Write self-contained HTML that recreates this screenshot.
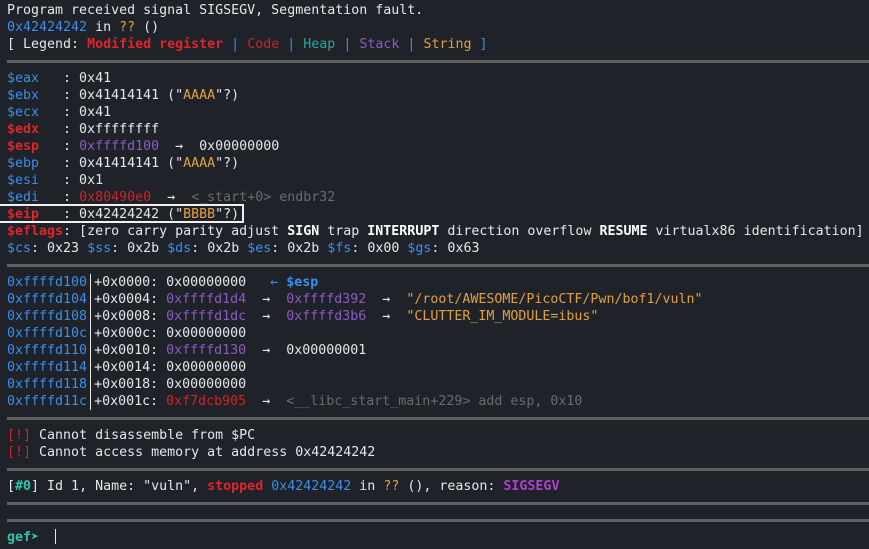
<!DOCTYPE html>
<html><head><meta charset="utf-8"><style>
html,body{margin:0;padding:0;background:#1f2329;width:869px;height:549px;overflow:hidden}
pre{margin:0;padding:2px 0 0 7px;font-family:"DejaVu Sans Mono","Liberation Mono",monospace;font-size:13.3px;line-height:17px;color:#e6e6e6;white-space:pre}
.b{color:#3b8eea}.r{color:#e0242a;font-weight:bold}.rd{color:#d0232a}.cd{color:#c0282d}
.h{color:#2aa79a}.s{color:#8a5cc0}.o{color:#e0a040}.g{color:#6a6a6a}.w{font-weight:bold;color:#fff}
.sep{display:block;height:17px;position:relative}
.sep:after{content:"";position:absolute;left:0;right:-10px;top:7px;height:3px;background:#5e5f61}
.a{display:inline-block;border-right:1px solid #e6e6e6;padding-right:3px;margin-right:3px;color:#3b8eea}
.box{display:inline-block;outline:2px solid #f0f0f0;outline-offset:0;margin-left:-7px;padding-left:7px;padding-right:3px;height:15px;line-height:17px}
.t{color:#2fc5a8;font-weight:bold}
</style></head><body><pre>Program received signal SIGSEGV, Segmentation fault.
<span class="b">0x42424242</span> in <span class="o">??</span> ()
[ Legend: <span class="r">Modified register</span> <span class="b">|</span> <span class="cd">Code</span> <span class="b">|</span> <span class="h">Heap</span> <span class="b">|</span> <span class="s">Stack</span> <span class="b">|</span> <span class="o">String</span> <span class="b">]</span>
<span class="sep"></span><span class="b">$eax</span>   : 0x41
<span class="b">$ebx</span>   : 0x41414141 ("<span class="o">AAAA</span>"?)
<span class="b">$ecx</span>   : 0x41
<span class="r">$edx</span>   : 0xffffffff
<span class="r">$esp</span>   : <span class="s">0xffffd100</span>  →  0x00000000
<span class="b">$ebp</span>   : 0x41414141 ("<span class="o">AAAA</span>"?)
<span class="b">$esi</span>   : 0x1
<span class="b">$edi</span>   : <span class="rd">0x80490e0</span>  →  <span class="g">&lt;_start+0&gt; endbr32</span>
<span class="box"><span class="r">$eip</span>   : 0x42424242 ("<span class="o">BBBB</span>"?)</span>
<span class="r">$eflags</span>: [zero carry parity adjust <span class="w">SIGN</span> trap <span class="w">INTERRUPT</span> direction overflow <span class="w">RESUME</span> virtualx86 identification]
<span class="b">$cs</span>: 0x23 <span class="b">$ss</span>: 0x2b <span class="b">$ds</span>: 0x2b <span class="b">$es</span>: 0x2b <span class="b">$fs</span>: 0x00 <span class="b">$gs</span>: 0x63
<span class="sep"></span><span class="a">0xffffd100</span>+0x0000: 0x00000000   <span class="b">←</span> <span class="b" style="font-weight:bold">$esp</span>
<span class="a">0xffffd104</span>+0x0004: <span class="s">0xffffd1d4</span>  →  <span class="s">0xffffd392</span>  →  <span class="o">"/root/AWESOME/PicoCTF/Pwn/bof1/vuln"</span>
<span class="a">0xffffd108</span>+0x0008: <span class="s">0xffffd1dc</span>  →  <span class="s">0xffffd3b6</span>  →  <span class="o">"CLUTTER_IM_MODULE=ibus"</span>
<span class="a">0xffffd10c</span>+0x000c: 0x00000000
<span class="a">0xffffd110</span>+0x0010: <span class="s">0xffffd130</span>  →  0x00000001
<span class="a">0xffffd114</span>+0x0014: 0x00000000
<span class="a">0xffffd118</span>+0x0018: 0x00000000
<span class="a">0xffffd11c</span>+0x001c: <span class="rd">0xf7dcb905</span>  →  <span class="g">&lt;__libc_start_main+229&gt; add esp, 0x10</span>
<span class="sep"></span><span class="rd">[!]</span> Cannot disassemble from $PC
<span class="rd">[!]</span> Cannot access memory at address 0x42424242
<span class="sep"></span>[<span class="t">#0</span>] Id 1, Name: "vuln", <span class="r">stopped</span> <span class="b">0x42424242</span> in <span class="o">??</span> (), reason: <span class="r" style="color:#b040d0">SIGSEGV</span>
<span class="sep"></span><span class="sep"></span><span class="t">gef➤</span>  <span style="display:inline-block;width:1px;height:15px;background:#e6e6e6;vertical-align:-3px"></span>
</pre></body></html>
